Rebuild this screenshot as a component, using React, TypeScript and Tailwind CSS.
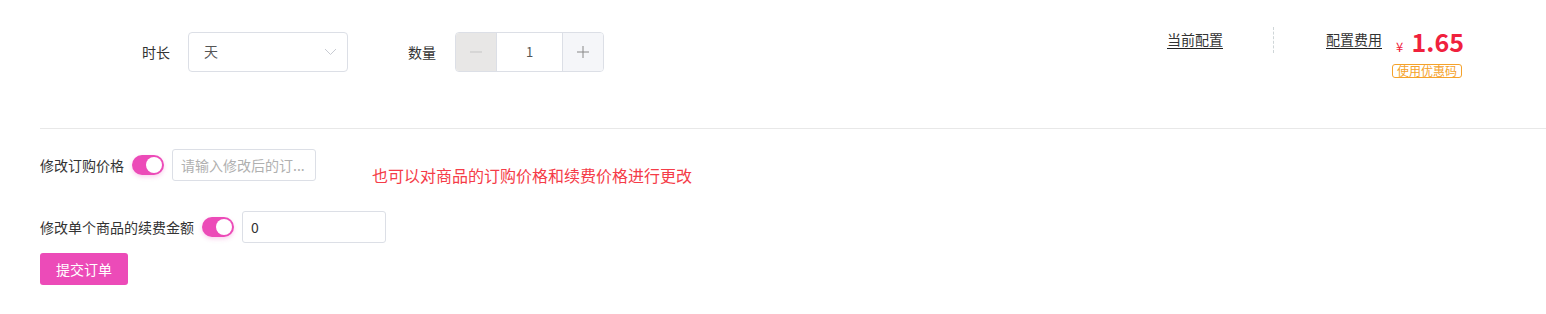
import React from "react";

const font = { fontFamily: '"Noto Sans CJK SC", "Noto Sans", sans-serif' };

function Toggle() {
  return (
    <div className="relative h-[20px] w-[32px] shrink-0 rounded-full bg-[#ec4bb8] shadow-[0_2px_4px_rgba(236,75,184,0.25)]">
      <div className="absolute right-[2px] top-[2px] h-[16px] w-[16px] rounded-full bg-white" />
    </div>
  );
}

export default function App() {
  return (
    <div className="min-h-[314px] w-[1546px] bg-white text-[#333]" style={font}>
      <div className="ml-[40px] flex h-[129px] border-b border-[#e8e8e8]">
        <div className="mt-[32px] flex h-[39px] items-center pl-[102px]">
          <span className="text-[14px] leading-none text-[#333]">时长</span>
          <div className="ml-[18px] flex h-[40px] w-[160px] items-center justify-between rounded-[4px] border border-[#dcdfe6] pl-[15px] pr-[10px]">
            <span className="text-[14px] text-[#555]">天</span>
            <svg width="13" height="8" viewBox="0 0 13 8" fill="none">
              <path d="M1 1l5.5 5.5L12 1" stroke="#c8cbd2" strokeWidth="1" />
            </svg>
          </div>
          <span className="ml-[60px] text-[14px] leading-none text-[#333]">数量</span>
          <div className="ml-[19px] flex h-[40px] w-[149px] overflow-hidden rounded-[4px] border border-[#dcdfe6]">
            <div className="flex w-[41px] items-center justify-center border-r border-[#dcdfe6] bg-[#e8e7e6]">
              <svg width="12" height="2" viewBox="0 0 12 2"><path d="M0 1h12" stroke="#c5c5c5" strokeWidth="1" /></svg>
            </div>
            <div className="flex flex-1 items-center justify-center text-[13px] text-[#555]">1</div>
            <div className="flex w-[41px] items-center justify-center border-l border-[#dcdfe6] bg-[#f5f6f9]">
              <svg width="12" height="12" viewBox="0 0 12 12"><path d="M0 6h12M6 0v12" stroke="#888" strokeWidth="1" /></svg>
            </div>
          </div>
        </div>
        <div className="ml-auto mr-[82px] mt-[27px] flex items-start">
          <span className="mt-[4px] border-b border-[#222] text-[14px] leading-[17px] text-[#333]">当前配置</span>
          <div className="ml-[50px] h-[26px] border-l border-dashed border-[#cfd6d8]" />
          <span className="ml-[52px] mt-[4px] border-b border-[#222] text-[14px] leading-[17px] text-[#333]">配置费用</span>
          <div className="ml-[10px] flex w-[72px] flex-col items-start">
            <div className="flex w-full items-baseline">
              <span className="ml-[4px] text-[13px] text-[#f0213d]">¥</span>
              <span className="ml-auto text-[25px] font-bold leading-[28px] text-[#f0213d]">1.65</span>
            </div>
            <span className="mt-[7px] rounded-[3px] border border-[#f5a22a] px-[4px] text-[12px] leading-[12px] text-[#f5a22a]">使用优惠码</span>
          </div>
        </div>
      </div>

      <div className="ml-[40px] mt-[20px] flex h-[32px] items-start">
        <div className="flex h-[32px] items-center">
          <span className="text-[14px] text-[#333]">修改订购价格</span>
          <div className="ml-[8px]"><Toggle /></div>
          <input
            className="ml-[8px] h-[32px] w-[144px] rounded-[3px] border border-[#dcdfe6] px-[8px] text-[14px] text-[#333] outline-none placeholder:text-[#b0b0b0]"
            placeholder="请输入修改后的订..."
          />
        </div>
        <span className="ml-[56px] mt-[16px] text-[16px] leading-[20px] text-[#f53c48]">也可以对商品的订购价格和续费价格进行更改</span>
      </div>

      <div className="ml-[40px] mt-[30px] flex h-[32px] items-center">
        <span className="text-[14px] text-[#333]">修改单个商品的续费金额</span>
        <div className="ml-[8px]"><Toggle /></div>
        <input
          className="ml-[8px] h-[32px] w-[144px] rounded-[3px] border border-[#dcdfe6] px-[8px] text-[14px] text-[#333] outline-none"
          defaultValue="0"
        />
      </div>

      <button className="ml-[40px] mt-[10px] h-[32px] w-[88px] rounded-[3px] bg-[#ec4bb8] text-[14px] text-white">
        提交订单
      </button>
    </div>
  );
}
